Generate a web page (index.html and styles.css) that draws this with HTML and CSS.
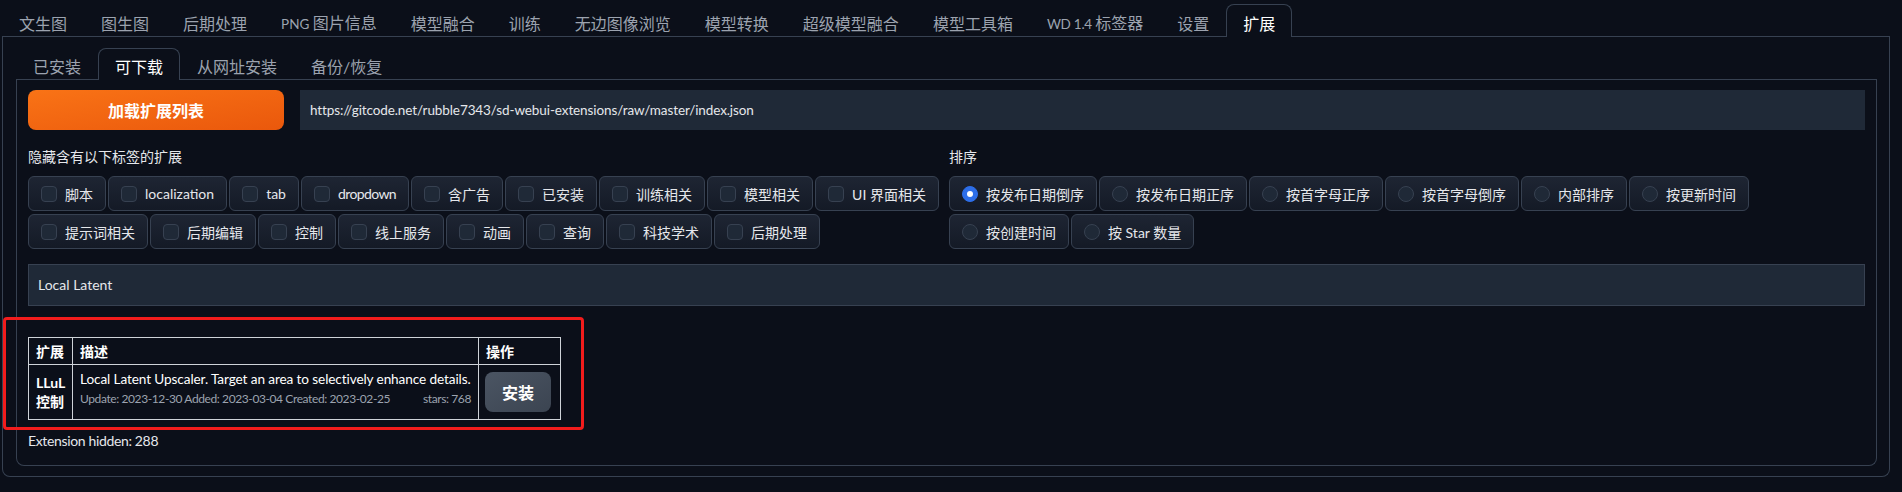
FILE: index.html
```html
<!DOCTYPE html>
<html lang="zh-CN">
<head>
<meta charset="utf-8">
<title>扩展</title>
<link rel="stylesheet" href="styles.css">
</head>
<body>
<div class="app">
  <nav class="tabs top-tabs">
    <button class="tab">文生图</button>
    <button class="tab">图生图</button>
    <button class="tab">后期处理</button>
    <button class="tab"><span class="en">PNG </span>图片信息</button>
    <button class="tab">模型融合</button>
    <button class="tab">训练</button>
    <button class="tab">无边图像浏览</button>
    <button class="tab">模型转换</button>
    <button class="tab">超级模型融合</button>
    <button class="tab">模型工具箱</button>
    <button class="tab"><span class="en tight">WD 1.4 </span>标签器</button>
    <button class="tab">设置</button>
    <button class="tab active">扩展</button>
  </nav>
  <div class="panel outer">
    <nav class="tabs sub-tabs">
      <button class="tab">已安装</button>
      <button class="tab active">可下载</button>
      <button class="tab">从网址安装</button>
      <button class="tab">备份/恢复</button>
    </nav>
    <div class="panel inner">
      <div class="load-row">
        <button class="btn-primary">加载扩展列表</button>
        <div class="field url">https://gitcode.net/rubble7343/sd-webui-extensions/raw/master/index.json</div>
      </div>

      <div class="filters">
        <div class="filter-col">
          <div class="label">隐藏含有以下标签的扩展</div>
          <div class="chips">
            <div class="chip-row">
              <label class="chip"><span class="box"></span>脚本</label>
              <label class="chip"><span class="box"></span>localization</label>
              <label class="chip"><span class="box"></span>tab</label>
              <label class="chip"><span class="box"></span><span class="narrow">dropdown</span></label>
              <label class="chip"><span class="box"></span>含广告</label>
              <label class="chip"><span class="box"></span>已安装</label>
              <label class="chip"><span class="box"></span>训练相关</label>
              <label class="chip"><span class="box"></span>模型相关</label>
              <label class="chip"><span class="box"></span>UI 界面相关</label>
            </div>
            <div class="chip-row">
              <label class="chip"><span class="box"></span>提示词相关</label>
              <label class="chip"><span class="box"></span>后期编辑</label>
              <label class="chip"><span class="box"></span>控制</label>
              <label class="chip"><span class="box"></span>线上服务</label>
              <label class="chip"><span class="box"></span>动画</label>
              <label class="chip"><span class="box"></span>查询</label>
              <label class="chip"><span class="box"></span>科技学术</label>
              <label class="chip"><span class="box"></span>后期处理</label>
            </div>
          </div>
        </div>
        <div class="filter-col">
          <div class="label">排序</div>
          <div class="chips">
            <div class="chip-row">
              <label class="chip"><span class="dot checked"></span>按发布日期倒序</label>
              <label class="chip"><span class="dot"></span>按发布日期正序</label>
              <label class="chip"><span class="dot"></span>按首字母正序</label>
              <label class="chip"><span class="dot"></span>按首字母倒序</label>
              <label class="chip"><span class="dot"></span>内部排序</label>
              <label class="chip"><span class="dot"></span>按更新时间</label>
            </div>
            <div class="chip-row">
              <label class="chip"><span class="dot"></span>按创建时间</label>
              <label class="chip"><span class="dot"></span>按 Star 数量</label>
            </div>
          </div>
        </div>
      </div>

      <div class="field search">Local Latent</div>

      <table class="ext-table">
        <colgroup>
          <col class="c-ext">
          <col class="c-desc">
          <col class="c-act">
        </colgroup>
        <thead>
          <tr><th>扩展</th><th>描述</th><th>操作</th></tr>
        </thead>
        <tbody>
          <tr>
            <td class="name">LLuL<br>控制</td>
            <td class="desc">
              <div class="desc-main">Local Latent Upscaler. Target an area to selectively enhance details.</div>
              <div class="desc-meta"><span>Update: 2023-12-30 Added: 2023-03-04 Created: 2023-02-25</span><span>stars: 768</span></div>
            </td>
            <td class="act"><button class="btn-secondary">安装</button></td>
          </tr>
        </tbody>
      </table>

      <div class="hidden-count">Extension hidden: 288</div>
    </div>
  </div>
</div>
<div class="annotation"></div>
</body>
</html>
```
FILE: styles.css
```css
* {
  box-sizing: border-box;
  margin: 0;
  padding: 0;
}

body {
  width: 1902px;
  height: 492px;
  overflow: hidden;
  position: relative;
  background: #0b0f19;
  color: #e5e7eb;
  font-family: Lato, "Noto Sans CJK SC", sans-serif;
  font-size: 14px;
}

.app {
  width: 1888px;
  margin-left: 2px;
  padding-top: 4px;
}

/* tabs */
.tabs {
  display: flex;
  border-bottom: 1px solid #374151;
}

.tab {
  font-family: inherit;
  font-size: 16px;
  line-height: 24px;
  color: #9ca3af;
  background: transparent;
  border: 1px solid transparent;
  border-bottom: 0;
  border-radius: 8px 8px 0 0;
  height: 33px;
  padding: 5px 16px 0;
  margin-bottom: -1px;
  white-space: nowrap;
}

.tab .en {
  font-size: 13.5px;
}

.tab .en.tight {
  letter-spacing: -0.25px;
}

.tab.active {
  color: #ffffff;
  border-color: #374151;
  background: #0b0f19;
}

.sub-tabs .tab {
  height: 32px;
  padding-top: 4px;
}

/* panels */
.panel {
  border: 1px solid #374151;
  border-top: 0;
  border-radius: 0 0 8px 8px;
}

.outer {
  height: 440px;
  padding: 11px 12px 10px 13px;
}

.inner {
  height: 386px;
  padding: 10px 11px;
}

/* load row */
.load-row {
  display: flex;
  gap: 16px;
  height: 40px;
}

.btn-primary {
  width: 256px;
  flex: none;
  border: 0;
  border-radius: 8px;
  background: linear-gradient(to bottom right, #f97316, #ea580c);
  color: #ffffff;
  font-family: inherit;
  font-size: 16px;
  font-weight: 700;
}

.field {
  background: #1f2937;
  color: #e5e7eb;
  font-size: 14px;
  white-space: nowrap;
}

.url {
  flex: 1;
  line-height: 40px;
  padding: 0 10px;
  font-size: 13.5px;
  letter-spacing: -0.1px;
}

/* filters */
.filters {
  margin-top: 17px;
  display: grid;
  grid-template-columns: 915px 1fr;
  column-gap: 6px;
}

.label {
  line-height: 20px;
  color: #e5e7eb;
}

.chips {
  margin-top: 9px;
  display: flex;
  flex-direction: column;
  gap: 3px;
}

.chip-row {
  display: flex;
  gap: 2px;
}

.chip {
  display: flex;
  align-items: center;
  gap: 8px;
  height: 35px;
  padding: 0 12px;
  border: 1px solid #374151;
  border-radius: 6px;
  background: linear-gradient(to top, #141a26, #1e2533);
  color: #e5e7eb;
  white-space: nowrap;
}

.chip .narrow {
  letter-spacing: -0.6px;
}

.box {
  width: 16px;
  height: 16px;
  flex: none;
  border: 1px solid #374151;
  border-radius: 4px;
  background: #1f2937;
}

.dot {
  width: 16px;
  height: 16px;
  flex: none;
  border: 1px solid #374151;
  border-radius: 50%;
  background: #1f2937;
  display: flex;
  align-items: center;
  justify-content: center;
}

.dot.checked {
  background: #2d6ee8;
  border-color: #2d6ee8;
}

.dot.checked::after {
  content: "";
  width: 6px;
  height: 6px;
  border-radius: 50%;
  background: #ffffff;
}

/* search */
.search {
  margin-top: 15px;
  height: 42px;
  line-height: 40px;
  border: 1px solid #374151;
  padding: 0 9px;
}

/* table */
.ext-table {
  margin-top: 31px;
  width: 532px;
  table-layout: fixed;
  border-collapse: collapse;
  color: #ffffff;
}

.c-ext { width: 44px; }
.c-desc { width: 406px; }
.c-act { width: 82px; }

.ext-table th,
.ext-table td {
  border: 1px solid #cfd3d8;
  text-align: left;
  padding: 0 7px;
}

.ext-table th {
  height: 27px;
  font-weight: 700;
  vertical-align: middle;
}

.ext-table td {
  height: 55px;
}

.name {
  font-weight: 700;
  line-height: 19px;
  vertical-align: middle;
}

.desc {
  vertical-align: top;
  padding-top: 4px !important;
}

.desc-main {
  line-height: 20px;
  white-space: nowrap;
  font-size: 13.6px;
  letter-spacing: -0.1px;
}

.desc-meta {
  display: flex;
  justify-content: space-between;
  margin-top: 2px;
  font-size: 12px;
  line-height: 16px;
  color: #9ca3af;
  white-space: nowrap;
  letter-spacing: -0.4px;
}

.act {
  vertical-align: middle;
  padding: 0 6px !important;
}

.btn-secondary {
  width: 66px;
  height: 40px;
  border: 0;
  border-radius: 8px;
  background: linear-gradient(to bottom right, #4b5563, #3b4451);
  color: #ffffff;
  font-family: inherit;
  font-size: 16px;
  font-weight: 700;
}

.hidden-count {
  margin-top: 11px;
  line-height: 20px;
  letter-spacing: -0.35px;
}

/* red annotation frame drawn over the screenshot */
.annotation {
  position: absolute;
  left: 3px;
  top: 317px;
  width: 581px;
  height: 113px;
  border: 3px solid #f21c1c;
  border-radius: 4px;
  pointer-events: none;
}
```
